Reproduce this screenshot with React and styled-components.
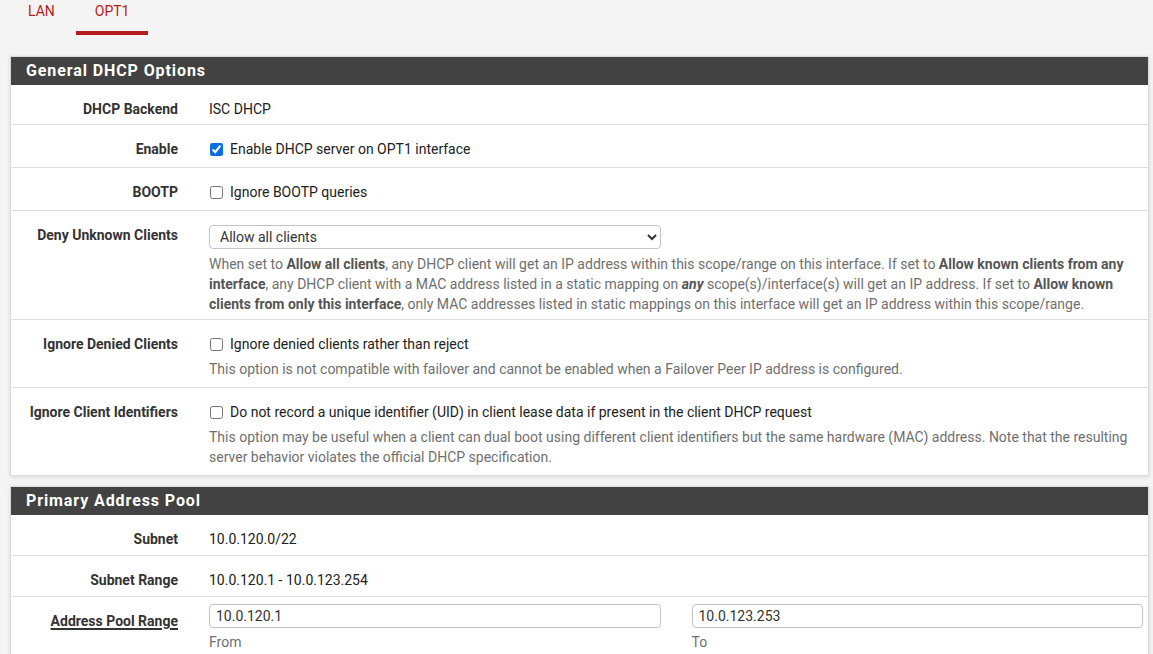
import styled, { createGlobalStyle } from "styled-components";

const GlobalStyle = createGlobalStyle`
body {
  margin: 0;
  background: #f4f4f4;
  font-family: Roboto, "Liberation Sans", sans-serif;
  font-size: 14px;
  color: #212121;
}
`;

const Page = styled.div`
padding: 1px 4px 20px 10px;
`;

const Tabs = styled.ul`
display: flex;
gap: 2px;
list-style: none;
margin: 0 0 21px -1px;
padding: 0;
`;

const Tab = styled.li`
padding: 0 19px 10px;
line-height: 20px;
color: #b71c1c;
font-size: 14px;
border-bottom: 4px solid ${(p) => (p.$active ? "#b71c1c" : "transparent")};
cursor: pointer;
`;

const Panel = styled.section`
background: #fff;
border: 1px solid #dcdcdc;
box-shadow: 0 1px 4px rgba(0, 0, 0, 0.12);
margin-bottom: 10px;
`;

const PanelHeading = styled.h2`
margin: 0;
height: 28px;
padding: 0 15px;
background: #424242;
color: #fff;
font-size: 16px;
font-weight: 700;
letter-spacing: 0.9px;
line-height: 28px;
`;

const Row = styled.div`
display: grid;
grid-template-columns: 167px 1fr;
column-gap: 31px;
padding: 14px 5px ${(p) => p.$pb || 6}px 0;
border-top: ${(p) => (p.$first ? "none" : "1px solid #e0e0e0")};
`;

const Label = styled.div`
text-align: right;
font-weight: 700;
line-height: 20px;
color: #333;
`;

const LinkLabel = styled.span`
text-decoration: underline;
text-decoration-thickness: 2px;
text-underline-offset: 2px;
cursor: pointer;
`;

const Value = styled.div`
line-height: 20px;
color: #212121;
`;

const CheckLine = styled.label`
display: flex;
align-items: center;
line-height: 20px;
color: #212121;
`;

const Check = styled.input.attrs({ type: "checkbox" })`
width: 13px;
height: 13px;
margin: 0 7px 0 1px;
accent-color: #0b6ee0;
`;

const Help = styled.div`
margin-top: 5px;
line-height: 20px;
color: #6f6f6f;
b {
  color: #555;
}
`;

const Select = styled.select`
display: block;
width: 452px;
height: 24px;
padding: 0 6px;
border: 1px solid #c4c4c4;
border-radius: 4px;
background: #fff;
font-family: Roboto, "Liberation Sans", sans-serif;
font-size: 14px;
color: #333;
`;

const RangeGrid = styled.div`
display: grid;
grid-template-columns: 1fr 1fr;
column-gap: 31px;
margin-top: -7px;
`;

const Field = styled.div`
display: flex;
flex-direction: column;
gap: 4px;
`;

const TextInput = styled.input`
height: 24px;
box-sizing: border-box;
padding: 0 6px;
border: 1px solid #c4c4c4;
border-radius: 4px;
font-family: Roboto, "Liberation Sans", sans-serif;
font-size: 14px;
color: #333;
`;

const FieldHint = styled.span`
line-height: 20px;
color: #6f6f6f;
`;

export default function App() {
  return (
    <>
      <GlobalStyle />
      <Page>
        <Tabs>
          <Tab>LAN</Tab>
          <Tab $active>OPT1</Tab>
        </Tabs>

        <Panel>
          <PanelHeading>General DHCP Options</PanelHeading>
          <Row $first $pb={5}>
            <Label>DHCP Backend</Label>
            <Value>ISC DHCP</Value>
          </Row>
          <Row $pb={8}>
            <Label>Enable</Label>
            <CheckLine>
              <Check defaultChecked />
              Enable DHCP server on OPT1 interface
            </CheckLine>
          </Row>
          <Row $pb={8}>
            <Label>BOOTP</Label>
            <CheckLine>
              <Check />
              Ignore BOOTP queries
            </CheckLine>
          </Row>
          <Row $pb={5}>
            <Label>Deny Unknown Clients</Label>
            <div>
              <Select defaultValue="all">
                <option value="all">Allow all clients</option>
                <option value="any">Allow known clients from any interface</option>
                <option value="this">Allow known clients from only this interface</option>
              </Select>
              <Help>
                When set to <b>Allow all clients</b>, any DHCP client will get an IP address within this
                scope/range on this interface. If set to <b>Allow known clients from any interface</b>, any
                DHCP client with a MAC address listed in a static mapping on <b><i>any</i></b>{" "}
                scope(s)/interface(s) will get an IP address. If set to{" "}
                <b>Allow known clients from only this interface</b>, only MAC addresses listed in static
                mappings on this interface will get an IP address within this scope/range.
              </Help>
            </div>
          </Row>
          <Row $pb={8}>
            <Label>Ignore Denied Clients</Label>
            <div>
              <CheckLine>
                <Check />
                Ignore denied clients rather than reject
              </CheckLine>
              <Help>
                This option is not compatible with failover and cannot be enabled when a Failover Peer IP
                address is configured.
              </Help>
            </div>
          </Row>
          <Row $pb={8}>
            <Label>Ignore Client Identifiers</Label>
            <div>
              <CheckLine>
                <Check />
                Do not record a unique identifier (UID) in client lease data if present in the client DHCP
                request
              </CheckLine>
              <Help>
                This option may be useful when a client can dual boot using different client identifiers but
                the same hardware (MAC) address. Note that the resulting server behavior violates the
                official DHCP specification.
              </Help>
            </div>
          </Row>
        </Panel>

        <Panel>
          <PanelHeading>Primary Address Pool</PanelHeading>
          <Row $first>
            <Label>Subnet</Label>
            <Value>10.0.120.0/22</Value>
          </Row>
          <Row>
            <Label>Subnet Range</Label>
            <Value>10.0.120.1 - 10.0.123.254</Value>
          </Row>
          <Row>
            <Label>
              <LinkLabel>Address Pool Range</LinkLabel>
            </Label>
            <RangeGrid>
              <Field>
                <TextInput defaultValue="10.0.120.1" />
                <FieldHint>From</FieldHint>
              </Field>
              <Field>
                <TextInput defaultValue="10.0.123.253" />
                <FieldHint>To</FieldHint>
              </Field>
            </RangeGrid>
          </Row>
        </Panel>
      </Page>
    </>
  );
}
